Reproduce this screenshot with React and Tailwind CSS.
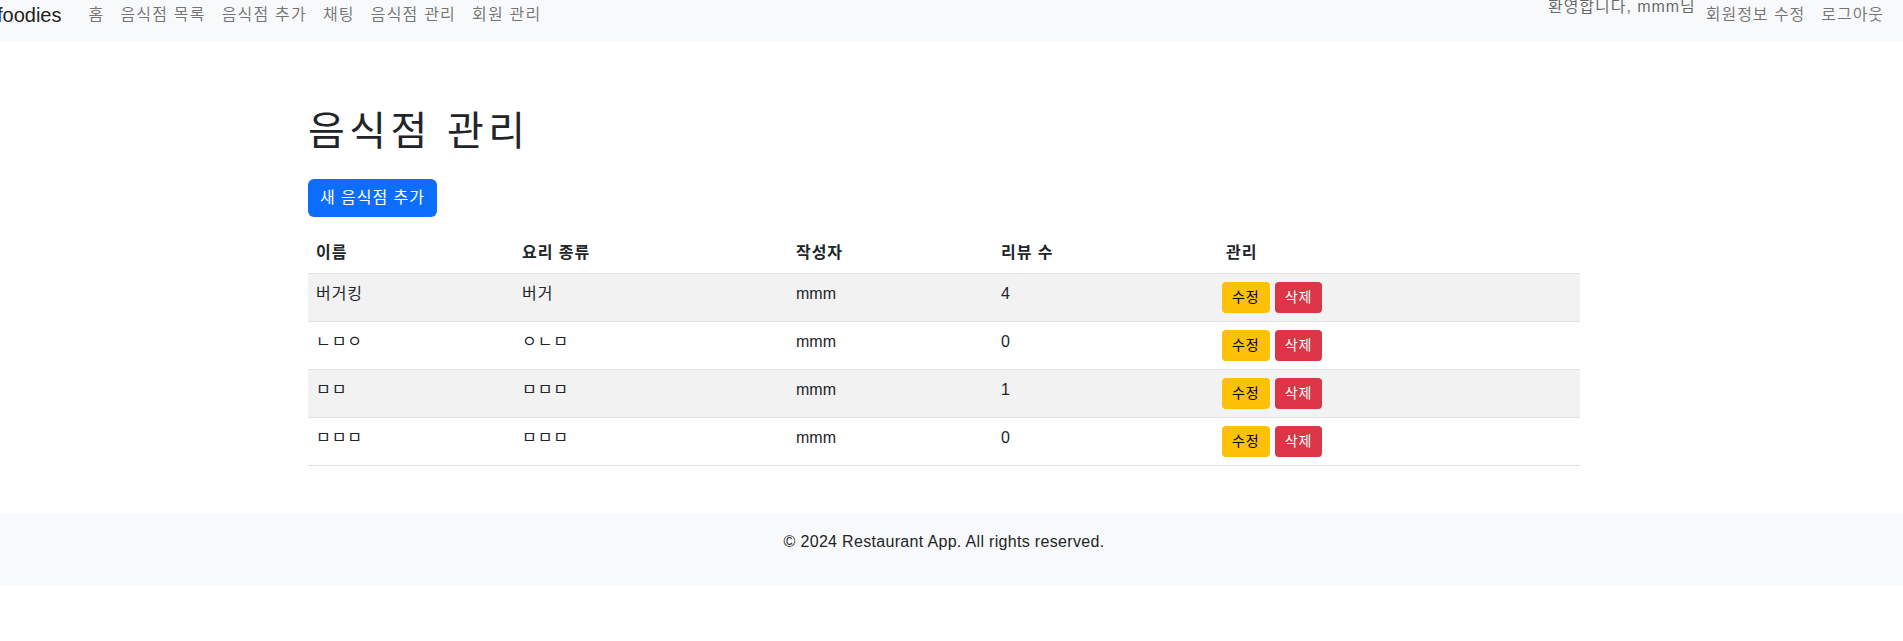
const navLinks = ["홈", "음식점 목록", "음식점 추가", "채팅", "음식점 관리", "회원 관리"];

const restaurants = [
  { id: 1, name: "버거킹", cuisine: "버거", author: "mmm", reviews: 4 },
  { id: 2, name: "ㄴㅁㅇ", cuisine: "ㅇㄴㅁ", author: "mmm", reviews: 0 },
  { id: 3, name: "ㅁㅁ", cuisine: "ㅁㅁㅁ", author: "mmm", reviews: 1 },
  { id: 4, name: "ㅁㅁㅁ", cuisine: "ㅁㅁㅁ", author: "mmm", reviews: 0 },
];

// korean glyphs come out narrower than the original, so ko text gets a bit of tracking
export default function App() {
  return (
    <div className="min-h-[641px] bg-white text-[#212529] text-[16px] leading-6 tracking-[0.06em] font-['Liberation_Sans','Noto_Sans_CJK_KR',sans-serif]">
      <nav className="h-[42px] bg-[#f8f9fa] flex items-start justify-between overflow-hidden">
        <div className="flex items-center pt-[3px]">
          <span className="text-[20px] leading-6 tracking-normal -ml-[3px] mr-[19px] text-black/90">foodies</span>
          {navLinks.map(l => (
            <a key={l} href="#" className="px-2 tracking-[0.075em] text-black/55">{l}</a>
          ))}
        </div>
        <div className="flex items-start pr-[11px]">
          <span className="-mt-[5px] mr-[2px] text-black/60">환영합니다, mmm님</span>
          <a href="#" className="px-2 pt-[3px] text-black/55">회원정보 수정</a>
          <a href="#" className="px-2 pt-[3px] text-black/55">로그아웃</a>
        </div>
      </nav>

      <main className="ml-[308px] w-[1272px] pt-[65px]">
        <h1 className="text-[40px] leading-[48px] tracking-[0.11em] mb-[24px]">음식점 관리</h1>
        <button className="bg-[#0d6efd] text-white rounded-md px-3 py-[7px] leading-6 mb-4">새 음식점 추가</button>
        <table className="w-full table-fixed border-collapse">
          <thead>
            <tr className="border-b border-[#dee2e6]">
              <th className="w-[206px] text-left font-bold px-2 py-2">이름</th>
              <th className="w-[274px] text-left font-bold px-2 py-2">요리 종류</th>
              <th className="w-[205px] text-left font-bold px-2 py-2">작성자</th>
              <th className="w-[225px] text-left font-bold px-2 py-2">리뷰 수</th>
              <th className="text-left font-bold px-2 py-2">관리</th>
            </tr>
          </thead>
          <tbody>
            {restaurants.map((r, i) => (
              <tr key={r.id} className={"border-b border-[#dee2e6] " + (i % 2 === 0 ? "bg-[#f2f2f2]" : "bg-white")}>
                <td className="px-2 py-2 align-top">{r.name}</td>
                <td className="px-2 py-2 align-top">{r.cuisine}</td>
                <td className="px-2 py-2 align-top tracking-normal">{r.author}</td>
                <td className="px-2 py-2 align-top tracking-normal">{r.reviews}</td>
                <td className="px-2 py-2 align-top">
                  <div className="flex gap-[5px] -ml-[4px]">
                    <button className="bg-[#ffc107] text-black text-[14px] leading-[21px] px-[10px] py-[5px] rounded">수정</button>
                    <button className="bg-[#dc3545] text-white text-[14px] leading-[21px] px-[10px] py-[5px] rounded">삭제</button>
                  </div>
                </td>
              </tr>
            ))}
          </tbody>
        </table>
      </main>

      <footer className="mt-12 bg-[#f8f9fa] pt-4 pb-8">
        <p className="ml-[308px] w-[1272px] text-center tracking-[0.02em]">© 2024 Restaurant App. All rights reserved.</p>
      </footer>
    </div>
  );
}
